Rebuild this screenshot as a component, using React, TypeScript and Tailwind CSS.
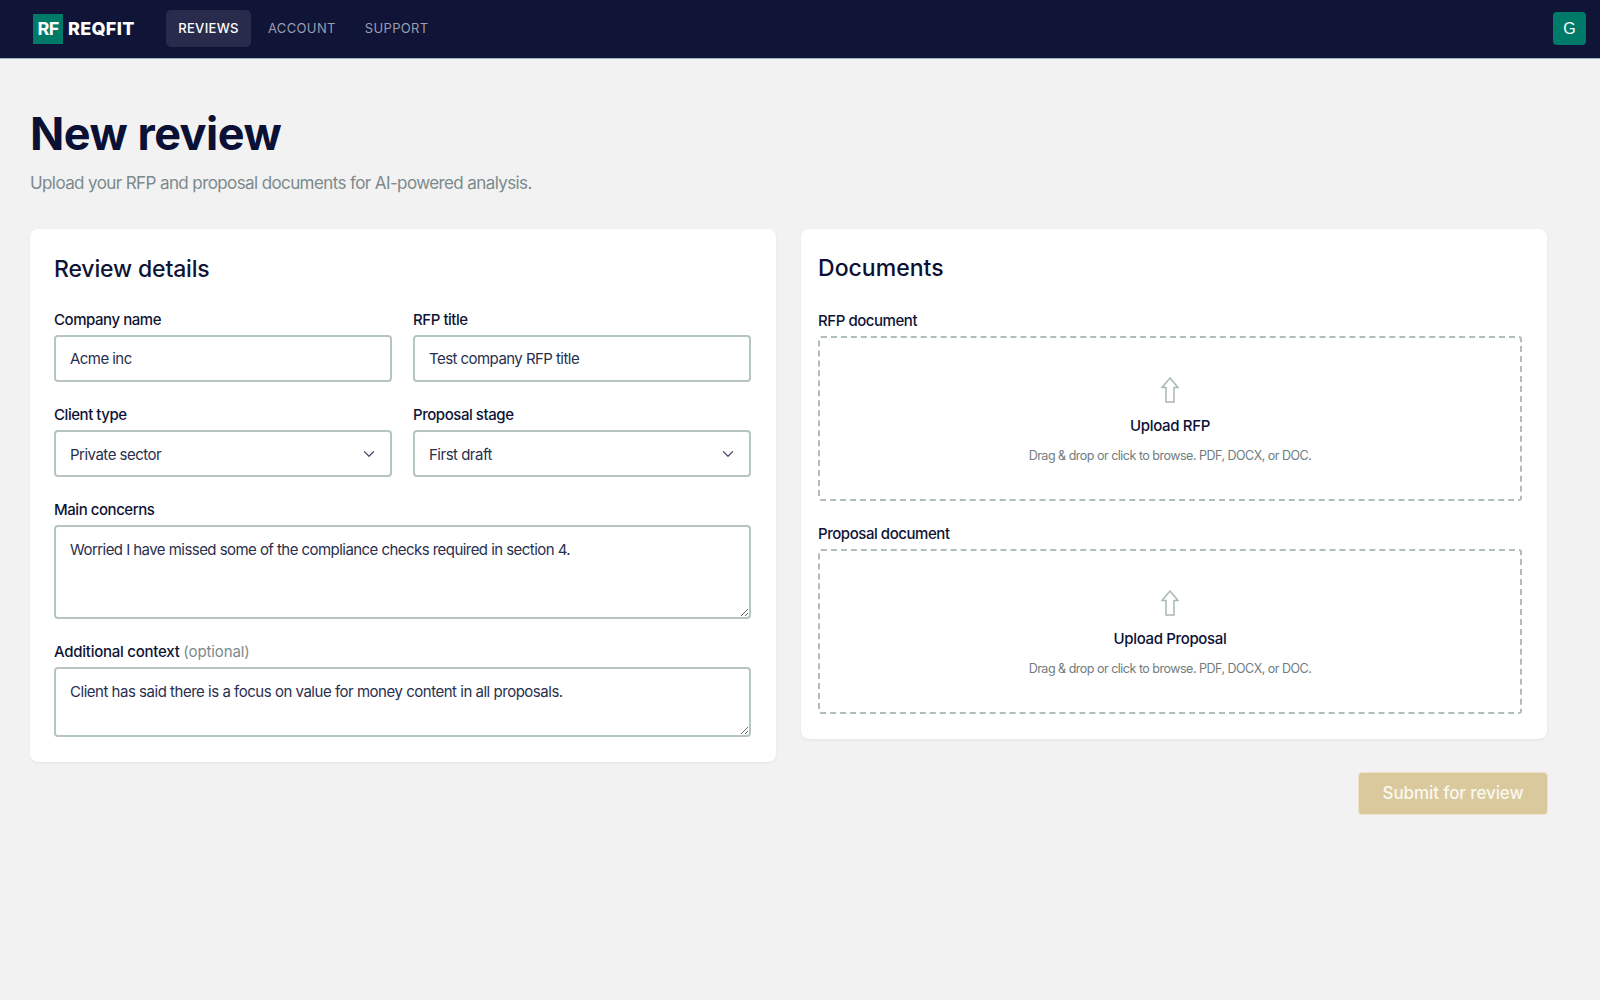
import { ChevronDown } from "lucide-react";

const font = "font-['Inter','Liberation_Sans',sans-serif]";

function Label({ children }: { children: React.ReactNode }) {
  return <label className="block text-[15px] leading-[20px] font-medium tracking-[-0.45px] text-[#0f1436]">{children}</label>;
}

const fieldCls =
  "block w-full border-2 border-[#b7c4c4] rounded-[4px] bg-white text-[15px] text-[#2a2f4e] px-[14px] outline-none " + font;

function TextField({ label, value }: { label: string; value: string }) {
  return (
    <div>
      <Label>{label}</Label>
      <input defaultValue={value} className={fieldCls + " tracking-[-0.55px] h-[47px] mt-[5px]"} />
    </div>
  );
}

function SelectField({ label, value }: { label: string; value: string }) {
  return (
    <div>
      <Label>{label}</Label>
      <div className="relative mt-[5px]">
        <select defaultValue={value} className={fieldCls + " tracking-[-0.5px] h-[47px] pt-[3px] appearance-none"}>
          <option>{value}</option>
        </select>
        <ChevronDown className="absolute right-[14px] top-[15px] w-[18px] h-[18px] text-[#4a4f68] pointer-events-none" strokeWidth={1.6} />
      </div>
    </div>
  );
}

function Area({ label, value, cls }: { label: React.ReactNode; value: string; cls: string }) {
  return (
    <div>
      <Label>{label}</Label>
      <textarea defaultValue={value} className={fieldCls + " mt-[5px] pt-[13px] leading-[20px] " + cls} />
    </div>
  );
}

function UploadArrow() {
  return (
    <svg width="18" height="26" viewBox="0 0 18 26" fill="none" stroke="#a9b7b7" strokeWidth="1.5" strokeLinejoin="miter">
      <path d="M9 1 L17 10.5 H13 V25 H5 V10.5 H1 Z" />
    </svg>
  );
}

function Drop({ label, title }: { label: string; title: string }) {
  return (
    <div>
      <Label>{label}</Label>
      <div className="mt-[5px] h-[165px] border-2 border-dashed border-[#b1bdbd] rounded-[3px] flex flex-col items-center pt-[39px]">
        <UploadArrow />
        <div className="mt-[13px] text-[15px] leading-[20px] font-medium tracking-[-0.35px] text-[#0b1035]">{title}</div>
        <div className="mt-[10px] text-[12.5px] leading-[20px] tracking-[-0.5px] text-[#6f7d7f]">
          Drag &amp; drop or click to browse. PDF, DOCX, or DOC.
        </div>
      </div>
    </div>
  );
}

export default function App() {
  return (
    <div className={"min-h-[1000px] bg-[#f2f2f2] " + font}>
      <header className="h-[59px] bg-[#101437] border-b border-[#9fb4b8] flex items-center pl-[33px] pr-[14px] pb-[1px]">
        <div className="flex items-center w-[133px]">
          <div className="w-[30px] h-[30px] bg-[#007a68] flex items-center justify-center text-white font-bold text-[18px] tracking-[-0.6px] leading-none">RF</div>
          <div className="ml-[5px] text-white font-extrabold text-[18px] tracking-[0.3px] leading-none">REQFIT</div>
        </div>
        <nav className="flex items-center text-[13px] tracking-[0.35px]">
          <a className="h-[37px] w-[85px] rounded-[5px] bg-[#282b4b] flex items-center justify-center text-white font-medium">REVIEWS</a>
          <a className="ml-[17px] text-[#9a9caf]">ACCOUNT</a>
          <a className="ml-[29px] text-[#9a9caf]">SUPPORT</a>
        </nav>
        <div className="ml-auto w-[33px] h-[33px] rounded-[4px] bg-[#007a68] flex items-center justify-center text-white text-[16px] font-['Liberation_Sans',sans-serif]">G</div>
      </header>

      <main className="pl-[30px] pr-[53px]">
        <h1 className="mt-[49px] text-[45px] leading-[52px] font-bold tracking-[-0.5px] text-[#0b1035]">New review</h1>
        <p className="mt-[11px] text-[17px] leading-[24px] tracking-[-0.6px] text-[#7b8a8c]">
          Upload your RFP and proposal documents for AI-powered analysis.
        </p>

        <div className="mt-[34px] grid grid-cols-2 gap-[25px] items-start">
          <section className="bg-white rounded-[8px] shadow-[0_1px_3px_rgba(0,0,0,0.06)] pl-[24px] pr-[25px] pt-[25px] pb-[25px]">
            <h2 className="text-[23px] leading-[30px] font-medium tracking-[-0.15px] text-[#0f1436]">Review details</h2>
            <div className="mt-[26px] grid grid-cols-2 gap-x-[21px] gap-y-[23px]">
              <TextField label="Company name" value="Acme inc" />
              <TextField label="RFP title" value="Test company RFP title" />
              <SelectField label="Client type" value="Private sector" />
              <SelectField label="Proposal stage" value="First draft" />
              <div className="col-span-2">
                <Area label="Main concerns" value="Worried I have missed some of the compliance checks required in section 4." cls="tracking-[-0.55px] h-[94px]" />
              </div>
              <div className="col-span-2">
                <Area
                  label={<span className="tracking-[-0.25px]">Additional context <span className="font-normal tracking-[-0.1px] text-[#7b8a8c]">(optional)</span></span>}
                  value="Client has said there is a focus on value for money content in all proposals."
                  cls="tracking-[-0.48px] h-[70px]"
                />
              </div>
            </div>
          </section>

          <div>
            <section className="bg-white rounded-[8px] shadow-[0_1px_3px_rgba(0,0,0,0.06)] pl-[17px] pr-[25px] pt-[24px] pb-[25px]">
              <h2 className="text-[23px] leading-[30px] font-medium tracking-[0.03px] text-[#0b1035]">Documents</h2>
              <div className="mt-[28px] flex flex-col gap-[23px]">
                <Drop label="RFP document" title="Upload RFP" />
                <Drop label="Proposal document" title="Upload Proposal" />
              </div>
            </section>
            <div className="mt-[33px] -mr-[1px] flex justify-end">
              <button className="w-[190px] h-[43px] rounded-[4px] bg-[#d9c99d] border border-[#ece3c8] text-[#fbf8ef] text-[17px] font-medium tracking-[-0.1px]">
                Submit for review
              </button>
            </div>
          </div>
        </div>
      </main>
    </div>
  );
}
